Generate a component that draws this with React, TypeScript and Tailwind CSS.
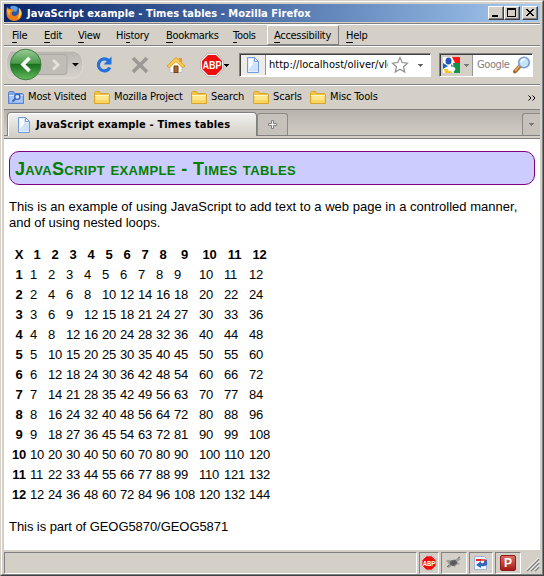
import React from 'react';

const N = [1, 2, 3, 4, 5, 6, 7, 8, 9, 10, 11, 12];
const ui = "font-['DejaVu_Sans_Condensed','DejaVu_Sans',sans-serif] [font-stretch:condensed]";

function Mnemonic({ text, at }: { text: string; at: number }) {
  return (
    <>
      {text.slice(0, at)}
      <span className="border-b border-black">{text[at]}</span>
      {text.slice(at + 1)}
    </>
  );
}

function Folder({ blue = false }: { blue?: boolean }) {
  return (
    <svg width="16" height="16" viewBox="0 0 16 16" className="shrink-0">
      <path d="M.5 13.5v-11l1-1h4l1 2h8l1 1v9z" fill={blue ? '#83a9ec' : '#f2c340'} stroke={blue ? '#5b82cc' : '#d8a52c'} />
      <path d="M1.5 12.5V5.5h13v7z" fill={blue ? '#a8c6f8' : '#ffe68a'} />
      <path d="M1 5.5h14" stroke={blue ? '#d9e7ff' : '#fff5c4'} />
      {blue ? (
        <g fill="none" stroke="#3966bd" strokeWidth="1.4">
          <circle cx="9.3" cy="6.8" r="2.6" fill="#d4e5ff" />
          <path d="M7.3 8.8 4.5 11.6" strokeWidth="2" />
        </g>
      ) : (
        <path d="M1.5 10h13v2.500h-13z" fill="#fbd461" />
      )}
    </svg>
  );
}

function PageIcon() {
  return (
    <svg width="14" height="16" viewBox="0 0 14 16" className="shrink-0">
      <path d="M1.500.5h7l4 4v11h-11z" fill="#e3effe" stroke="#6f9ddd" />
      <path d="M3 2h5v4h4v8H3z" fill="#cfe2fb" />
      <path d="M3 2h4v5L3 12z" fill="#f7fbff" />
      <path d="M8.500.5v4h4z" fill="#fff" stroke="#6f9ddd" />
    </svg>
  );
}

function Caret({ color = '#000' }: { color?: string }) {
  return (
    <svg width="5" height="3" viewBox="0 0 5 3" className="shrink-0" shapeRendering="crispEdges">
      <path d="M0 0h5v1H4v1H3v1H2V2H1V1H0z" fill={color} />
    </svg>
  );
}

function Abp({ size }: { size: number }) {
  return (
    <svg width={size} height={size} viewBox="0 0 24 24" className="shrink-0">
      <path d="M7.500.7h9l6.800 6.800v9l-6.800 6.800h-9L.7 16.500v-9z" fill="#fff" stroke="#a5a5a5" strokeWidth=".8" />
      <path d="M8 2h8l6 6v8l-6 6H8l-6-6V8z" fill="#ed0d0d" />
      <text x="12" y="16" textAnchor="middle" fill="#fff" fontSize="10.500" fontWeight="700" fontFamily="Liberation Sans, sans-serif" textLength="19" lengthAdjust="spacingAndGlyphs">ABP</text>
    </svg>
  );
}

function FirefoxIcon() {
  return (
    <svg width="16" height="16" viewBox="0 0 16 16" className="shrink-0">
      <circle cx="8" cy="8" r="7" fill="#2b54a5" />
      <path d="M4 2q4-3 8 1l-2 4-3-1z" fill="#5b9fe0" />
      <path d="M1 2l2 2 3 0 2 2-2 1q-1 3 2 4 4 0 5-4l0-4q3 2 3 6-1 7-8 7-7-1-7.500-7Q.2 5 1 2z" fill="#ed7d17" />
      <path d="M13 3q3 3 2 7-1 3-4 4 3-4 2-11z" fill="#fcd34a" />
      <path d="M1 4l3 1 2 1-2 1q-1 2 0 4Q1 9 1 4z" fill="#f9b13a" />
    </svg>
  );
}

function WinButton({ kind }: { kind: 'min' | 'max' | 'close' }) {
  return (
    <div className="h-[14px] w-4 border border-t-white border-l-white border-r-[#404040] border-b-[#404040] bg-[#d4d0c8] shadow-[inset_-1px_-1px_0_#808080]">
      <svg width="14" height="12" viewBox="0 0 14 12" shapeRendering="crispEdges">
        {kind === 'min' && <path d="M3 8h6v2H3z" />}
        {kind === 'max' && <path d="M2 1h9v9H2zM3 3v6h7V3z" fillRule="evenodd" />}
        {kind === 'close' && <path d="M3 2h2v1h1v1h2V3h1V2h2v1h-1v1H9v1H8v1h1v1h1v1h1v1H9V8H8V7H6v1H5v1H3V8h1V7h1V6h1V5H5V4H4V3H3z" />}
      </svg>
    </div>
  );
}

function TitleBar() {
  return (
    <div className="flex h-[18px] shrink-0 items-center bg-linear-to-r from-[#0a246a] to-[#a6caf0] pr-[2px] pl-[2px]">
      <FirefoxIcon />
      <span className={`${ui} ml-[5px] grow pt-[2px] text-[11px] leading-4 font-bold tracking-[0.03px] whitespace-nowrap text-white`}>
        JavaScript example - Times tables - Mozilla Firefox
      </span>
      <WinButton kind="min" />
      <WinButton kind="max" />
      <div className="w-[2px]" />
      <WinButton kind="close" />
    </div>
  );
}

function MenuBar() {
  const items: [string, number, string][] = [
    ['File', 0, 'w-8'],
    ['Edit', 0, 'w-[34px]'],
    ['View', 0, 'w-[38px]'],
    ['History', 2, 'w-[50px]'],
    ['Bookmarks', 0, 'w-[67px]'],
    ['Tools', 0, 'w-[35px]'],
  ];
  return (
    <div className={`${ui} mt-px flex h-[22px] shrink-0 items-center border-t border-[#808080] text-[11px] leading-[13px] tracking-[-0.3px] shadow-[inset_0_1px_0_#fff]`}>
      <div className="flex w-[263px] shrink-0 pt-px pl-[8px]">
        {items.map(([t, i, w]) => (
          <div key={t} className={`${w} shrink-0 whitespace-nowrap`}>
            <Mnemonic text={t} at={i} />
          </div>
        ))}
      </div>
      <div className="mt-px flex h-5 w-[72px] shrink-0 items-center border-t border-r border-b border-l border-t-white border-r-[#808080] border-b-[#808080] border-l-white pl-[6px]">
        <span><Mnemonic text="Accessibility" at={0} /></span>
      </div>
      <div className="pt-px pl-[7px]"><Mnemonic text="Help" at={0} /></div>
    </div>
  );
}

function NavBar() {
  return (
    <div className={`${ui} flex h-[39px] shrink-0 items-center border-t border-[#808080] text-[11px] shadow-[inset_0_1px_0_#fff]`}>
      <svg width="82" height="34" viewBox="0 0 82 34" className="shrink-0">
        <defs>
          <linearGradient id="back" x1="0" y1="0" x2="0" y2="1">
            <stop offset="0" stopColor="#9bcb98" />
            <stop offset=".46" stopColor="#4a9a49" />
            <stop offset=".5" stopColor="#1a701d" />
            <stop offset="1" stopColor="#65bc5d" />
          </linearGradient>
          <linearGradient id="tray" x1="0" y1="0" x2="0" y2="1">
            <stop offset="0" stopColor="#b9b6af" />
            <stop offset="1" stopColor="#d6d3cc" />
          </linearGradient>
        </defs>
        <path d="M6 3h64q9 2 9 13.500T70 30H6Q2 24 2 16.500T6 3z" fill="url(#tray)" stroke="#dedbd5" />
        <path d="M34 6.500h26q3 0 3 3v14q0 3-3 3H34z" fill="#c0bdb7" stroke="#aaa7a1" />
        <circle cx="21.700" cy="16.500" r="15.300" fill="url(#back)" stroke="#3c7d3e" />
        <path d="M25.500 10 19 16.500l6.500 6.500" fill="none" stroke="#fff" strokeWidth="3.600" />
        <path d="m49 12 5 4.800-5 4.800" fill="none" stroke="#e5e3df" strokeWidth="2.800" />
        <path d="M68 15h7l-3.500 3.500z" />
      </svg>
      <svg width="20" height="20" viewBox="0 0 20 20" className="ml-[8px] shrink-0">
        <path d="M14.500 5.500A6 6 0 1 0 15.800 12.500" fill="none" stroke="#2270dc" strokeWidth="3.200" />
        <path d="M17.500 1.500v8h-8z" fill="#2270dc" />
      </svg>
      <svg width="18" height="18" viewBox="0 0 18 18" className="ml-[17px] shrink-0">
        <path d="m2 2 14 14M16 2 2 16" stroke="#9b9994" strokeWidth="3.600" />
      </svg>
      <svg width="20" height="20" viewBox="0 0 20 20" className="ml-[17px] shrink-0">
        <path d="M4 10v7.500h12V10l-6-6z" fill="#fffdf3" stroke="#b4bccd" />
        <path d="M13 3h3v5h-3z" fill="#e39b25" />
        <path d="M1 11 10 2.500 19 11l-2 1.500-7-6-7 6z" fill="#ffcf54" stroke="#e29c22" />
        <path d="M8 11h4v6.500H8z" fill="#a8672d" stroke="#754010" />
      </svg>
      <div className="ml-[14px] flex items-center">
        <Abp size={24} />
        <Caret />
      </div>
      <div className="ml-[10px] flex h-[24px] w-[192px] shrink-0 items-center border border-t-[#808080] border-r-white border-b-white border-l-[#808080] bg-white shadow-[inset_1px_1px_0_#404040]">
        <div className="ml-px flex h-5 w-[25px] shrink-0 items-center justify-center border-r border-[#99968f] bg-[#eeece7]">
          <PageIcon />
        </div>
        <div className="ml-[3px] w-[119px] shrink-0 overflow-hidden tracking-[0.02px] whitespace-nowrap">http://localhost/oliver/vle</div>
        <svg width="18" height="18" viewBox="0 0 18 18" className="ml-[3px] shrink-0">
          <path d="m9 1.500 2.200 5 5.300.6-4 3.600 1.200 5.300L9 13.300 4.300 16l1.200-5.300-4-3.600 5.300-.6z" fill="#fff" stroke="#909090" strokeWidth="1.200" />
        </svg>
        <div className="ml-[9px]"><Caret color="#666" /></div>
      </div>
      <div className="ml-[8px] flex h-[24px] w-[94px] shrink-0 items-center border border-t-[#808080] border-r-white border-b-white border-l-[#808080] bg-white shadow-[inset_1px_1px_0_#404040]">
        <div className="ml-px flex h-[21px] w-8 shrink-0 items-center border-r border-[#99968f] bg-[#d4d0c8] pl-[2px]">
          <svg width="17" height="16" viewBox="0 0 17 16" className="shrink-0">
            <path d="M0 0h17v16H0z" fill="#fff" />
            <path d="M9 0h8v6h-5z" fill="#ff1414" />
            <path d="M10 6h7v10h-6z" fill="#159447" />
            <path d="M0 6l5 3-5 3z" fill="#1764c4" />
            <path d="M1 12h8v4H2z" fill="#f7c51c" />
            <ellipse cx="5.500" cy="4" rx="3" ry="3.500" fill="#2158bd" />
            <path d="m8 7 3 3-3 1z" fill="#2867c9" />
            <ellipse cx="8.500" cy="12" rx="3.800" ry="2.500" fill="#fff" />
          </svg>
          <div className="ml-[4px]"><Caret color="#777" /></div>
        </div>
        <span className="ml-[4px] w-[33px] shrink-0 tracking-[-0.4px] text-[#808080]">Google</span>
        <svg width="18" height="18" viewBox="0 0 18 18" className="ml-[3px] shrink-0">
          <path d="M7 10 2 15.500" stroke="#a86728" strokeWidth="4" strokeLinecap="round" />
          <path d="M6.500 10 2 15" stroke="#efb45f" strokeWidth="1.500" />
          <circle cx="11" cy="6.500" r="5.300" fill="#c4e3fc" stroke="#769cd1" strokeWidth="1.600" />
          <path d="M8 6q1-3 4-3" stroke="#fff" strokeWidth="1.500" fill="none" />
        </svg>
      </div>
    </div>
  );
}

function Bookmarks() {
  const items: [string, string][] = [
    ['Most Visited', 'w-[86px]'],
    ['Mozilla Project', 'w-[97px]'],
    ['Search', 'w-[62px]'],
    ['Scarls', 'w-[57px]'],
    ['Misc Tools', 'w-[90px]'],
  ];
  return (
    <div className={`${ui} flex h-[25px] shrink-0 items-center border-t border-[#808080] pt-px pl-1 text-[11px] tracking-[-0.15px] shadow-[inset_0_1px_0_#fff]`}>
      {items.map(([t, w], i) => (
        <div key={t} className={`${w} flex shrink-0 items-center gap-[4px] whitespace-nowrap`}>
          <Folder blue={i === 0} />
          {t}
        </div>
      ))}
      <svg width="8" height="6" viewBox="0 0 8 6" className="mr-[4px] ml-auto">
        <path d="m.5.5 2.500 2.500L.5 5.500M4.500.5 7 3 4.500 5.500" fill="none" stroke="#000" />
      </svg>
    </div>
  );
}

function TabStrip() {
  return (
    <div className="flex h-[30px] shrink-0 flex-col border-t border-[#808080] bg-[#d4d0c8]">
      <div className="flex h-[26px] items-end border-b border-[#808080] bg-linear-to-b from-[#b8b4ad] to-[#d0ccc4]">
        <div className="-mb-px ml-[3px] flex h-[24px] w-[250px] shrink-0 items-center rounded-t-[4px] border border-b-0 border-[#808080] bg-linear-to-b from-[#f2f1ef] to-[#d4d0c8] pl-[9px] shadow-[inset_1px_1px_0_#fff]">
          <PageIcon />
          <span className={`${ui} ml-[5px] pt-px text-[11px] font-bold tracking-[0.15px] whitespace-nowrap`}>JavaScript example - Times tables</span>
        </div>
        <div className="flex h-[22px] w-[31px] items-center justify-center rounded-t-[3px] border border-b-0 border-[#8c8983] bg-[#c6c2bb]">
          <svg width="9" height="9" viewBox="0 0 9 9">
            <path d="M3.500.5h2v3h3v2h-3v3h-2v-3h-3v-2h3z" fill="#eee" stroke="#85827d" />
          </svg>
        </div>
        <div className="ml-auto flex h-[22px] w-[18px] items-center justify-center rounded-tl-[3px] border border-r-0 border-b-0 border-[#8c8983] bg-[#c6c2bb]">
          <Caret color="#777" />
        </div>
      </div>
      <div className="mt-[2px] h-px bg-[#808080]" />
    </div>
  );
}

function TimesTable() {
  return (
    <table className="ml-[2px] w-[262px] table-fixed border-collapse text-left text-[13px] leading-4">
      <colgroup>
        <col className="w-[18px]" />
        {N.map((n) => (
          <col key={n} className={n < 9 ? 'w-[18px]' : 'w-[25px]'} />
        ))}
      </colgroup>
      <tbody>
        <tr className="h-5">
          <th className="p-0 pr-[2px] text-center">X</th>
          {N.map((n) => (
            <th key={n} className="p-0 pr-[2px] text-center tracking-[-0.23px]">{n}</th>
          ))}
        </tr>
        {N.map((r) => (
          <tr key={r} className="h-5">
            <th className="p-0 pr-[2px] text-center tracking-[-0.23px]">{r}</th>
            {N.map((c) => (
              <td key={c} className="p-0 pl-px tracking-[-0.23px] whitespace-nowrap">{r * c}</td>
            ))}
          </tr>
        ))}
      </tbody>
    </table>
  );
}

function Page() {
  return (
    <main className="min-h-0 grow bg-white pt-[12px] pr-[5px] pl-[5px] font-['Liberation_Sans',Arial,sans-serif] text-[13px] leading-4 text-black">
      <h1 className="flex h-[34px] items-center rounded-[10px] border border-[#800080] bg-[#ccccff] pt-[2px] pl-[5px] text-[18px] font-bold tracking-[0.36px] whitespace-nowrap text-[#008000] [font-variant-caps:small-caps]">
        JavaScript example - Times tables
      </h1>
      <p className="mt-[14px] whitespace-nowrap">
        <span className="tracking-[0.02px]">This is an example of using JavaScript to add text to a web page in a controlled manner,</span>
        <br />
        <span className="-tracking-[0.02px]">and of using nested loops.</span>
      </p>
      <div className="h-[14px]" />
      <TimesTable />
      <p className="mt-[14px] tracking-[-0.06px]">This is part of GEOG5870/GEOG5871</p>
    </main>
  );
}

function StatusBar() {
  const cell = 'flex h-[22px] items-center justify-center border border-t-[#808080] border-l-[#808080] border-r-white border-b-white';
  return (
    <footer className="flex h-[24px] shrink-0 gap-[2px] pt-[2px]">
      <div className={`${cell} grow`} />
      <div className={`${cell} w-[20px]`}><Abp size={16} /></div>
      <div className={`${cell} w-[26px]`}>
        <svg width="18" height="14" viewBox="0 0 18 14">
          <path d="M1 5q4-3 6 1l6-4 3 1-4 3 3 2-4 1-1 2-3-2-3 3-2-1 2-3z" fill="#9a9a98" />
          <path d="m6 5 4-1 2 3-4 3-3-2zM4 9l-2 2M13 2l2-1" fill="#5a5a5a" stroke="#666" />
        </svg>
      </div>
      <div className={`${cell} w-[24px]`}>
        <svg width="16" height="16" viewBox="0 0 16 16">
          <path d="M1.500 1.500h10l2 2v11h-12z" fill="#f6f8ff" stroke="#9fb4dd" />
          <path d="M3 4h5v2H3z" fill="#e32b22" />
          <path d="M8 5h4v3" fill="none" stroke="#d83a2b" strokeWidth="1.500" />
          <path d="M14 5v5q-3 2-6 1v2l-5-3 5-4v2q3 1 4-3z" fill="#3565b7" />
        </svg>
      </div>
      <div className={`${cell} w-[26px]`}>
        <div className="flex size-4 items-center justify-center rounded-[2px] border border-[#8e1b18] bg-linear-to-b from-[#da6b61] to-[#a61812] font-['Liberation_Sans',sans-serif] text-[12px] leading-none font-bold text-white">P</div>
      </div>
      <svg width="17" height="20" viewBox="-3 0 17 20" className="shrink-0">
        <path d="M1 19 13 7M5 19l8-8M9 19l4-4" stroke="#808080" strokeWidth="1.600" />
        <path d="M0 18.500 12.500 6M4 18.500l9-9M8 18.500l5-5" stroke="#fff" />
      </svg>
    </footer>
  );
}

export default function App() {
  return (
    <div className="h-[576px] w-[544px] border-t border-r border-b border-l border-t-[#d4d0c8] border-r-[#404040] border-b-[#404040] border-l-[#d4d0c8] bg-[#d4d0c8] text-black">
      <div className="flex h-full flex-col border border-t-white border-r-[#808080] border-b-[#808080] border-l-white pt-[2px] pr-[2px] pl-[2px]">
        <TitleBar />
        <MenuBar />
        <NavBar />
        <Bookmarks />
        <TabStrip />
        <Page />
        <StatusBar />
      </div>
    </div>
  );
}
